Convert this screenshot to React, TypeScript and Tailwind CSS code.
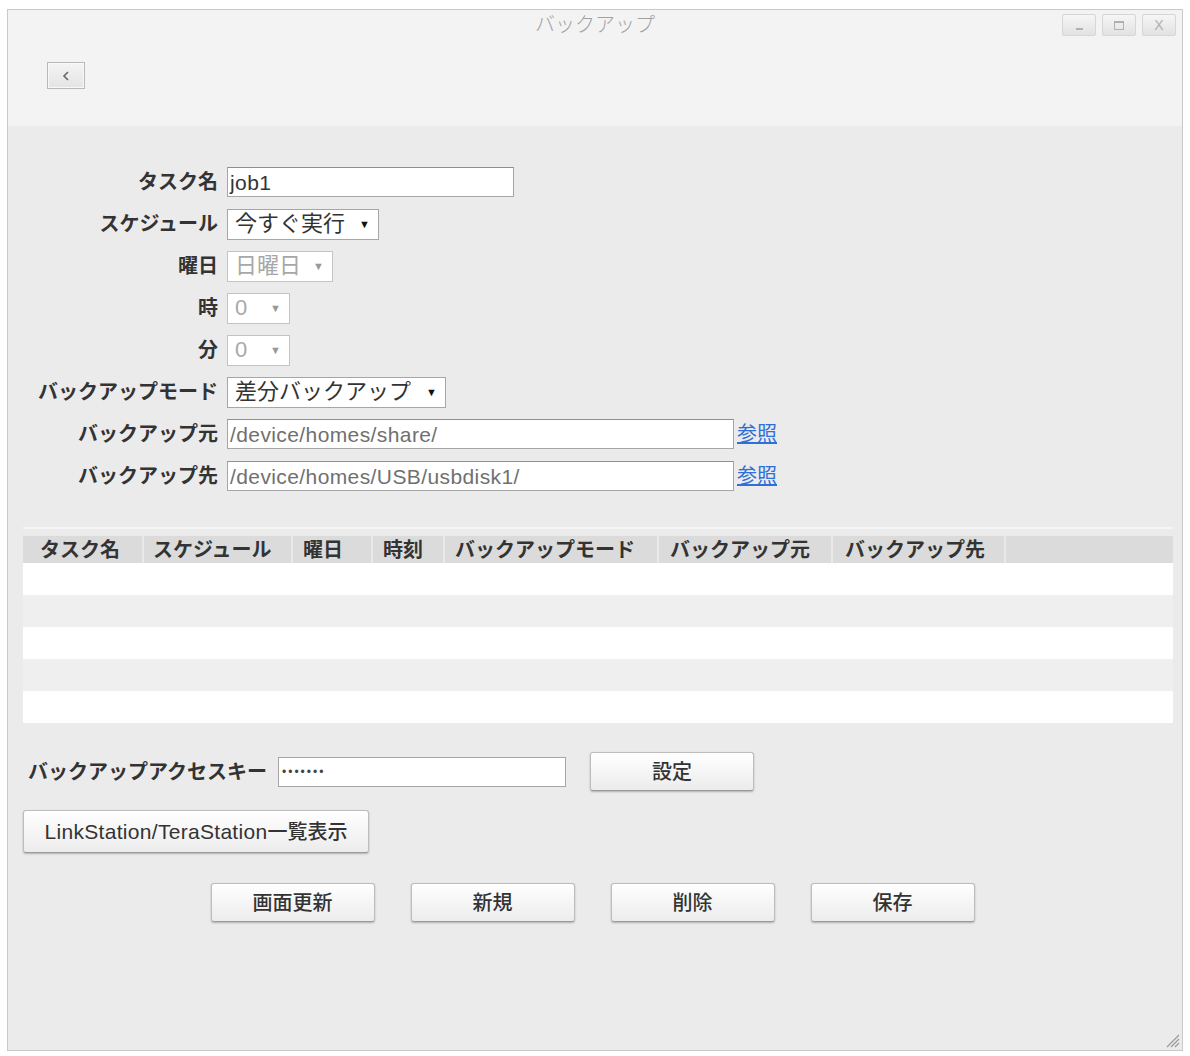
import React from "react";

const font = { fontFamily: '"Liberation Sans", "Noto Sans CJK JP", sans-serif' };

function Field({ label, children }: { label: string; children: React.ReactNode }) {
  return (
    <div className="flex h-[42px] items-center">
      <div className="w-[210px] shrink-0 text-right text-[20px] font-bold text-[#333]">{label}</div>
      <div className="ml-[9px] flex items-center">{children}</div>
    </div>
  );
}

function TextBox({ value, width, dim }: { value: string; width: string; dim?: boolean }) {
  return (
    <div
      className={`flex h-[30px] items-center border border-[#a6a6a6] border-t-[#8f8f8f] bg-white pl-[2px] text-[21px] leading-none tracking-[0.4px] ${width} ${
        dim ? "text-[#707070]" : "text-[#333]"
      }`}
    >
      {value}
    </div>
  );
}

function Dropdown({ value, width, disabled }: { value: string; width: string; disabled?: boolean }) {
  return (
    <div
      className={`flex h-[31px] items-center justify-between border bg-white pl-[7px] pr-[8px] text-[22px] leading-none ${width} ${
        disabled ? "border-[#c4c4c4] text-[#a8a8a8]" : "border-[#a6a6a6] text-[#333]"
      }`}
    >
      <span>{value}</span>
      <span className={`text-[11px] ${disabled ? "text-[#999]" : "text-[#111]"}`}>▼</span>
    </div>
  );
}

function Btn({ children, className }: { children: React.ReactNode; className: string }) {
  return (
    <button
      className={`flex items-center justify-center rounded-[3px] border border-[#bdbdbd] border-b-[#9a9a9a] bg-gradient-to-b from-white to-[#ececec] text-[20px] font-medium text-[#333] shadow-[0_1px_2px_rgba(0,0,0,0.25)] ${className}`}
    >
      {children}
    </button>
  );
}

const columns = [
  { name: "タスク名", w: "w-[119px]", pl: "pl-[17px]" },
  { name: "スケジュール", w: "w-[147px]", pl: "pl-[9px]" },
  { name: "曜日", w: "w-[78px]", pl: "pl-[10px]" },
  { name: "時刻", w: "w-[70px]", pl: "pl-[10px]" },
  { name: "バックアップモード", w: "w-[212px]", pl: "pl-[10px]" },
  { name: "バックアップ元", w: "w-[172px]", pl: "pl-[11px]" },
  { name: "バックアップ先", w: "w-[171px]", pl: "pl-[12px]" },
  { name: "", w: "flex-1", pl: "" },
];

export default function App() {
  return (
    <div className="h-[1056px] w-[1190px] bg-white pl-[7px] pt-[9px]" style={font}>
      <div className="flex h-[1042px] w-[1176px] flex-col border border-[#c9c9c9] bg-[#ebebeb]">
        {/* title bar */}
        <div className="grid h-[28px] grid-cols-[1fr_auto_1fr] bg-[#f3f3f3]">
          <div />
          <div className="self-center text-[20px] font-light text-[#a0a0a0]">バックアップ</div>
          <div className="flex justify-end gap-[6px] pr-[6px] pt-[4px]">
            {["min", "max", "close"].map((k) => (
              <div
                key={k}
                className="flex h-[22px] w-[34px] items-center justify-center rounded-[2px] border border-[#d6d6d6] bg-gradient-to-b from-[#f6f6f6] to-[#e2e2e2]"
              >
                {k === "min" && <div className="mt-[8px] h-[2px] w-[7px] bg-[#b0b0b0]" />}
                {k === "max" && <div className="h-[9px] w-[10px] border border-t-2 border-[#b0b0b0]" />}
                {k === "close" && <span className="text-[14px] leading-none text-[#b0b0b0]">X</span>}
              </div>
            ))}
          </div>
        </div>

        {/* toolbar */}
        <div className="h-[88px] bg-[#f3f3f3] pl-[39px] pt-[24px]">
          <button className="flex h-[27px] w-[38px] items-center justify-center border border-[#b9b9b9] bg-gradient-to-b from-[#f4f4f4] to-[#e4e4e4] shadow-[inset_0_0_0_1px_#f8f8f8]">
            <svg width="12" height="12" viewBox="0 0 12 12">
              <path d="M8 2 L4 6 L8 10" fill="none" stroke="#666" strokeWidth="1.6" />
            </svg>
          </button>
        </div>

        {/* body */}
        <div className="flex flex-1 flex-col pt-[35px]">
          <div className="flex flex-col">
            <Field label="タスク名">
              <TextBox value="job1" width="w-[287px]" />
            </Field>
            <Field label="スケジュール">
              <Dropdown value="今すぐ実行" width="w-[152px]" />
            </Field>
            <Field label="曜日">
              <Dropdown value="日曜日" width="w-[106px]" disabled />
            </Field>
            <Field label="時">
              <Dropdown value="0" width="w-[63px]" disabled />
            </Field>
            <Field label="分">
              <Dropdown value="0" width="w-[63px]" disabled />
            </Field>
            <Field label="バックアップモード">
              <Dropdown value="差分バックアップ" width="w-[219px]" />
            </Field>
            <Field label="バックアップ元">
              <TextBox value="/device/homes/share/" width="w-[507px]" dim />
              <a className="ml-[3px] text-[20px] text-[#2f6fd8] underline">参照</a>
            </Field>
            <Field label="バックアップ先">
              <TextBox value="/device/homes/USB/usbdisk1/" width="w-[507px]" dim />
              <a className="ml-[3px] text-[20px] text-[#2f6fd8] underline">参照</a>
            </Field>
          </div>

          {/* task list */}
          <div className="ml-[15px] mt-[30px] w-[1150px]">
            <div className="h-[2px] bg-[#f6f6f6]" />
            <div className="mt-[7px] flex h-[27px] gap-[2px] bg-[#e9e9e9]">
              {columns.map((c, i) => (
                <div
                  key={i}
                  className={`flex items-center bg-[#dbdbdb] text-[20px] font-bold text-[#333] ${c.w} ${c.pl}`}
                >
                  {c.name}
                </div>
              ))}
            </div>
            {[0, 1, 2, 3, 4].map((r) => (
              <div key={r} className={`h-[32px] ${r % 2 === 0 ? "bg-white" : "bg-[#efefef]"}`} />
            ))}
          </div>

          {/* access key */}
          <div className="mt-[29px] flex h-[39px] items-center pl-[20px]">
            <span className="text-[20px] font-bold text-[#333]">バックアップアクセスキー</span>
            <div className="ml-[11px] flex h-[30px] w-[288px] items-center border border-[#a6a6a6] bg-white pl-[3px] text-[12px] tracking-[2px] text-[#444]">
              •••••••
            </div>
            <Btn className="ml-[24px] h-[39px] w-[164px]">設定</Btn>
          </div>

          <div className="ml-[15px] mt-[19px]">
            <Btn className="h-[43px] w-[346px]">
              <span className="text-[21px] tracking-[0.3px]">LinkStation/TeraStation</span>一覧表示
            </Btn>
          </div>

          <div className="mt-[30px] flex justify-center gap-[36px] pr-[5px]">
            <Btn className="h-[39px] w-[164px]">画面更新</Btn>
            <Btn className="h-[39px] w-[164px]">新規</Btn>
            <Btn className="h-[39px] w-[164px]">削除</Btn>
            <Btn className="h-[39px] w-[164px]">保存</Btn>
          </div>

          <div className="mt-auto flex justify-end pb-[2px] pr-[2px]">
            <svg width="16" height="16" viewBox="0 0 16 16">
              <path d="M15 3 L3 15 M15 7 L7 15 M15 11 L11 15" stroke="#9a9a9a" strokeWidth="1.2" />
            </svg>
          </div>
        </div>
      </div>
    </div>
  );
}
